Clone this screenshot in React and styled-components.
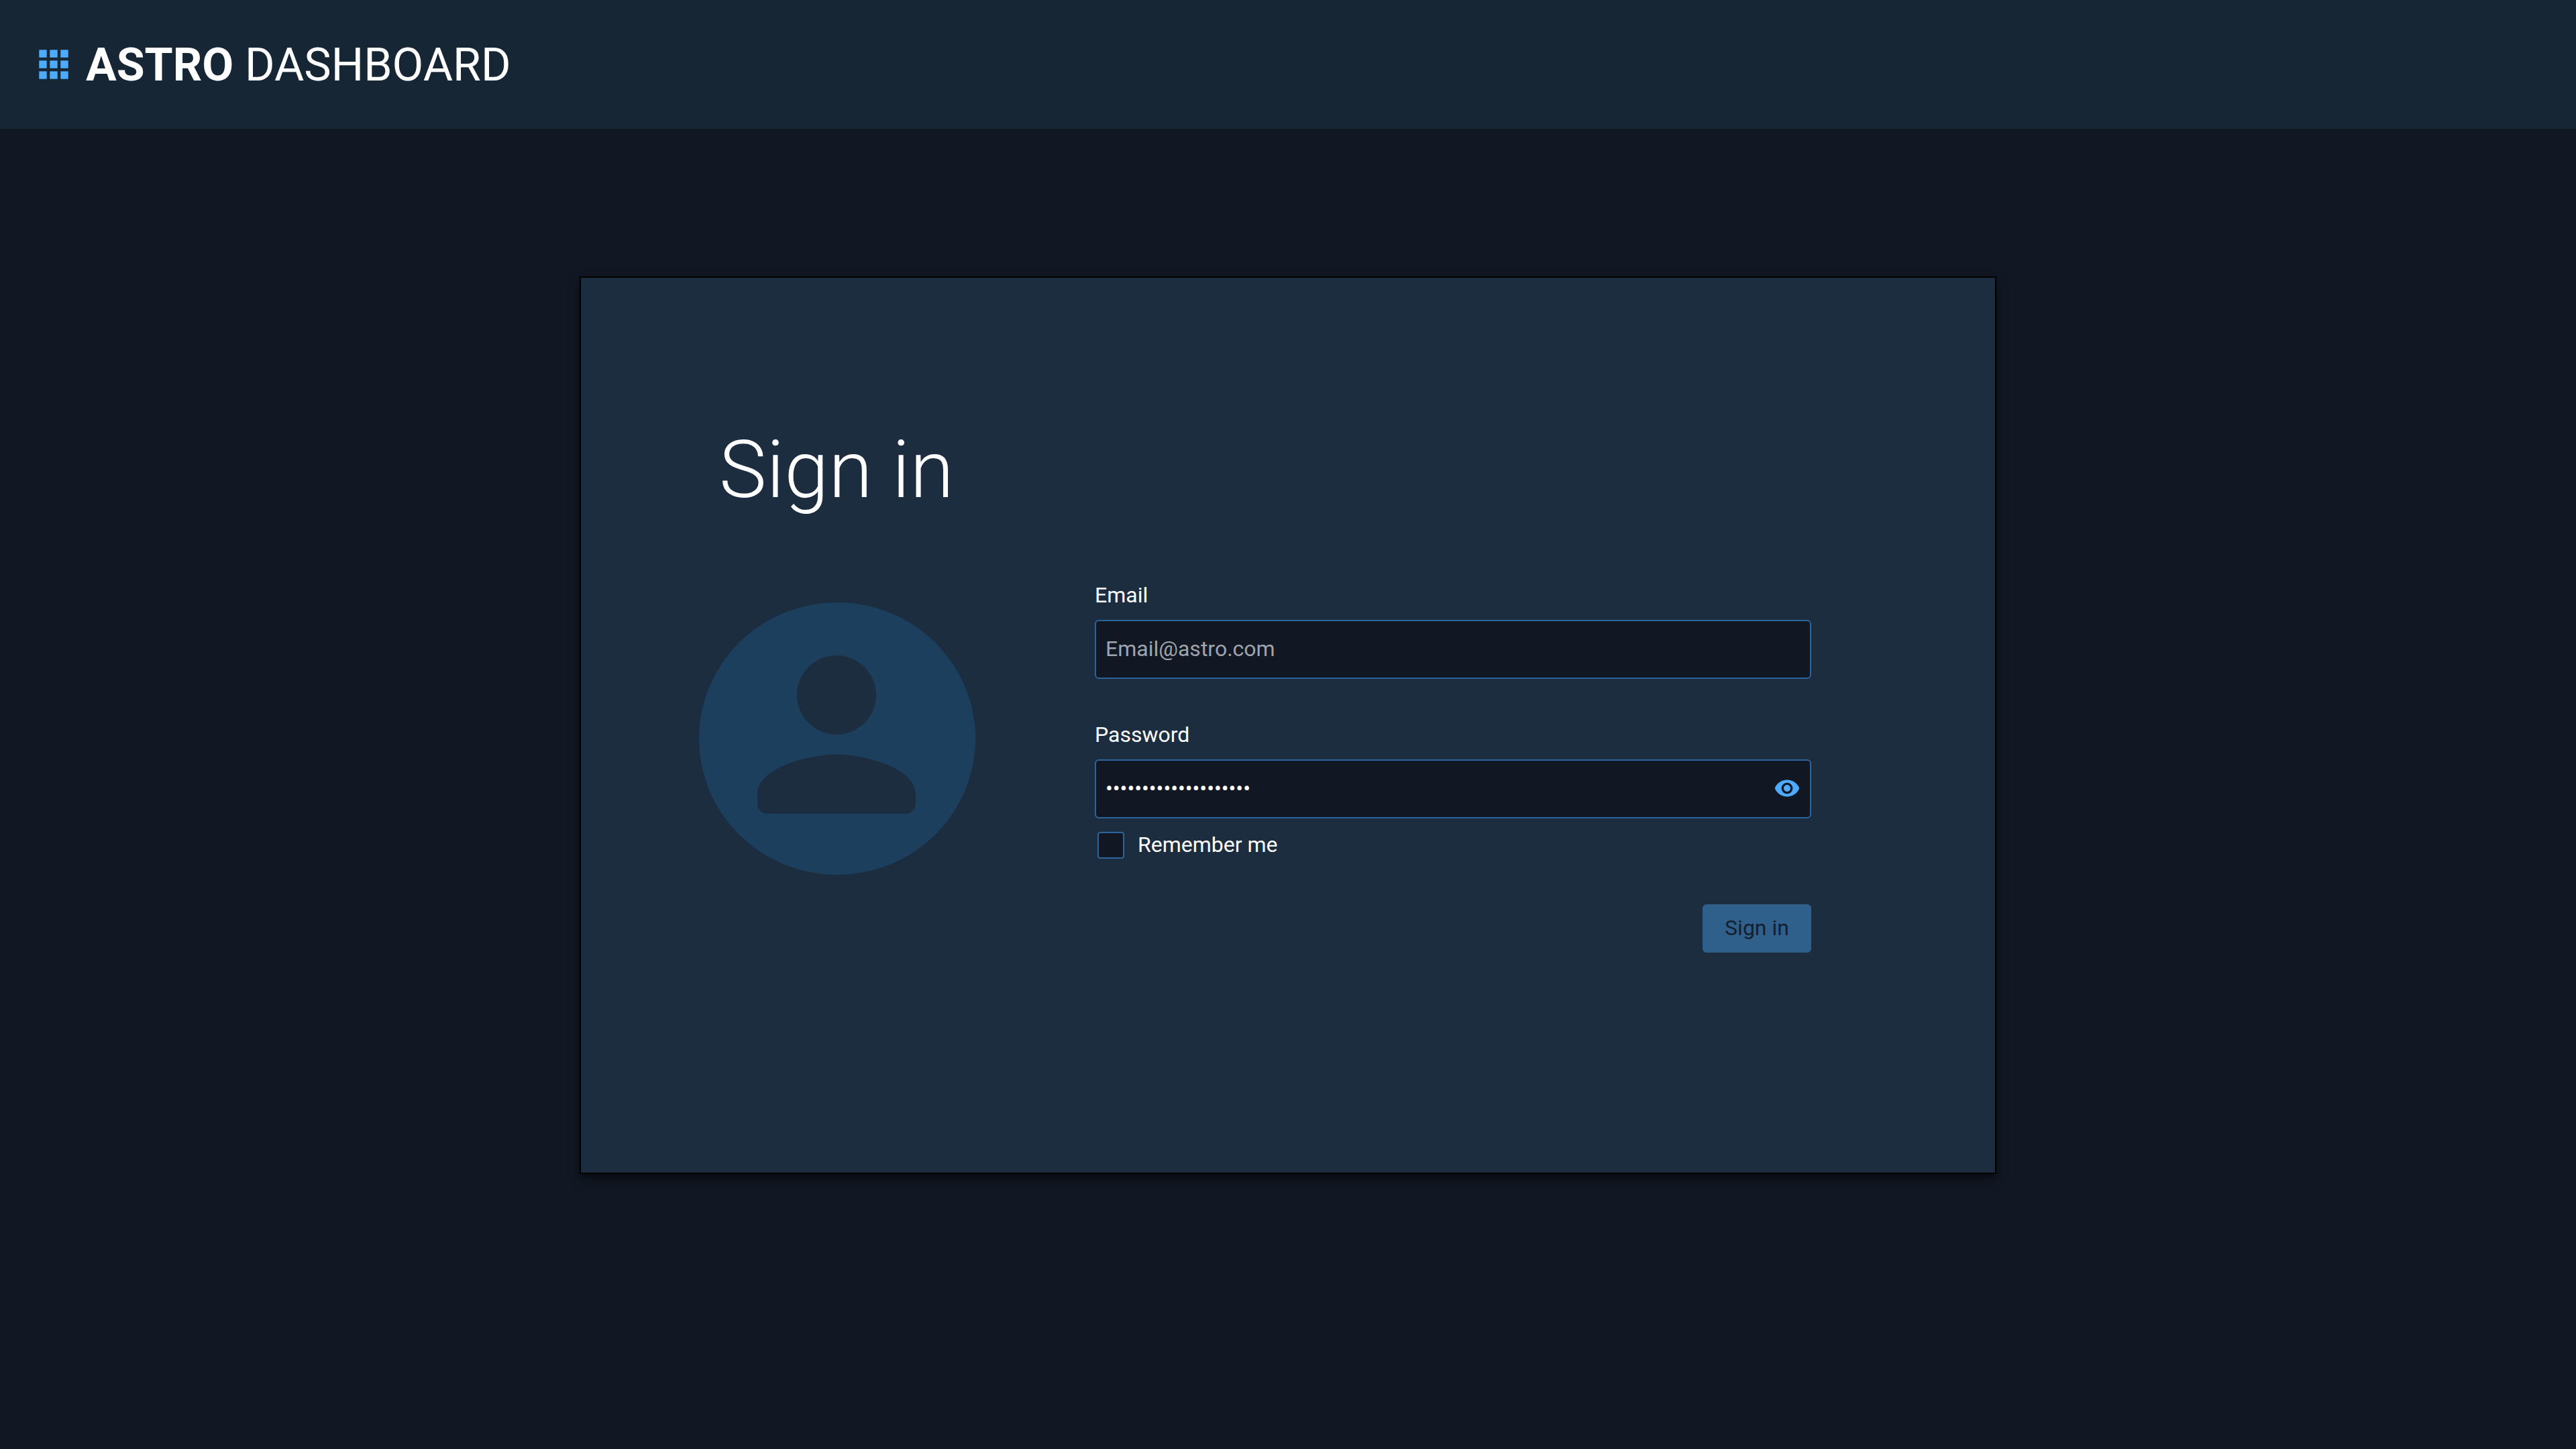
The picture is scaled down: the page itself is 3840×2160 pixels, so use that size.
import React, { useState } from "react";
import styled, { createGlobalStyle } from "styled-components";

const GlobalStyle = createGlobalStyle`
  *, *::before, *::after { box-sizing: border-box; }
  body {
    margin: 0;
    background: #111823;
    color: #ffffff;
    font-family: Roboto, "Liberation Sans", sans-serif;
    font-size: 32px;
    line-height: 38px;
  }
  input, button { font: inherit; }
`;

const Page = styled.div`
  display: flex;
  flex-direction: column;
  min-height: 100vh;
  background: #111823;
`;

const Header = styled.header`
  display: flex;
  align-items: center;
  gap: 24px;
  min-height: 192px;
  padding: 0 56px;
  background: #172635;
`;

const MenuButton = styled.button`
  display: flex;
  padding: 0;
  border: 0;
  background: none;
  color: #4dacff;
`;

const Brand = styled.h1`
  margin: 0;
  padding-top: 2px;
  font-size: 68px;
  font-weight: 400;
  line-height: 80px;
  text-transform: uppercase;
`;

const Main = styled.main`
  display: flex;
  justify-content: center;
  padding: 220px 0;
`;

const Card = styled.section`
  width: 55%;
  padding: 214px 274px 328px 176px;
  border: 2px solid #000000;
  background: #1c2d3f;
  box-shadow: 0 8px 12px rgba(0, 0, 0, 0.5);
`;

const Title = styled.h2`
  margin: 0 0 94px;
  padding-left: 30px;
  font-size: 119px;
  font-weight: 300;
  line-height: 146px;
`;

const Content = styled.div`
  display: grid;
  grid-template-columns: 412px 1fr;
  column-gap: 178px;
  align-items: start;
`;

const Avatar = styled.svg`
  display: block;
  margin-top: 30px;
`;

const Form = styled.form`
  display: flex;
  flex-direction: column;
`;

const Field = styled.div`
  display: flex;
  flex-direction: column;
  gap: 18px;
  margin-bottom: ${(p) => (p.$last ? "20px" : "64px")};
`;

const InputBox = styled.div`
  display: flex;
  align-items: center;
  height: 88px;
  padding: 0 14px 2px;
  border: 2px solid #2b659b;
  border-radius: 6px;
  background: #111823;
`;

const TextInput = styled.input`
  flex: 1;
  min-width: 0;
  padding: 0;
  border: 0;
  outline: 0;
  background: transparent;
  color: #ffffff;
  &::placeholder {
    color: #a0a4ab;
    opacity: 1;
  }
`;

const IconButton = styled.button`
  display: flex;
  padding: 0;
  border: 0;
  background: none;
  color: #4dacff;
`;

const Remember = styled.label`
  display: flex;
  align-items: flex-start;
  gap: 20px;
  padding-left: 4px;
  margin-bottom: 68px;
`;

const Checkbox = styled.input`
  appearance: none;
  width: 40px;
  height: 40px;
  margin: 0;
  border: 2px solid #2b659b;
  border-radius: 4px;
  background: #111823;
  &:checked { background: #4dacff; }
`;

const SubmitButton = styled.button`
  align-self: flex-end;
  min-width: 162px;
  height: 72px;
  padding: 0 32px 2px;
  border: 0;
  border-radius: 6px;
  background: #4dacff;
  color: #080c11;
  opacity: 0.4;
`;

const cells = [0, 16, 32];

export default function App() {
  const [visible, setVisible] = useState(false);
  return (
    <Page>
      <GlobalStyle />
      <Header>
        <MenuButton type="button" aria-label="Applications">
          <svg width="48" height="44" viewBox="-2 0 48 44" fill="currentColor">
            {cells.map((y) =>
              cells.map((x) => (
                <rect key={`${x}-${y}`} x={x + 0.3} y={y + 0.3} width="11.4" height="11.4" />
              ))
            )}
          </svg>
        </MenuButton>
        <Brand>
          <b>Astro</b> Dashboard
        </Brand>
      </Header>
      <Main>
        <Card>
          <Title>Sign in</Title>
          <Content>
            <Avatar width="412" height="406" viewBox="0 0 412 406" aria-hidden="true">
              <ellipse cx="206" cy="203" rx="206" ry="203" fill="#1c3f5d" />
              <path
                transform="translate(28 20) scale(14.75)"
                fill="#1c2d3f"
                d="M12 12c2.21 0 4-1.79 4-4s-1.79-4-4-4-4 1.79-4 4 1.79 4 4 4zm0 2c-2.67 0-8 1.34-8 4v1c0 .55.45 1 1 1h14c.55 0 1-.45 1-1v-1c0-2.66-5.33-4-8-4z"
              />
            </Avatar>
            <Form onSubmit={(e) => e.preventDefault()}>
              <Field>
                <label htmlFor="email">Email</label>
                <InputBox>
                  <TextInput id="email" type="email" placeholder="Email@astro.com" />
                </InputBox>
              </Field>
              <Field $last>
                <label htmlFor="password">Password</label>
                <InputBox>
                  <TextInput
                    id="password"
                    type={visible ? "text" : "password"}
                    defaultValue="12345678901234567890"
                  />
                  <IconButton
                    type="button"
                    aria-label="Show password"
                    onClick={() => setVisible(!visible)}
                  >
                    <svg width="40" height="40" viewBox="0 0 24 24" fill="currentColor">
                      <path d="M12 4.5C7 4.5 2.73 7.61 1 12c1.73 4.39 6 7.5 11 7.5s9.27-3.11 11-7.5c-1.73-4.39-6-7.5-11-7.5zM12 17c-2.76 0-5-2.24-5-5s2.24-5 5-5 5 2.24 5 5-2.24 5-5 5zm0-8c-1.66 0-3 1.34-3 3s1.34 3 3 3 3-1.34 3-3-1.34-3-3-3z" />
                    </svg>
                  </IconButton>
                </InputBox>
              </Field>
              <Remember>
                <Checkbox type="checkbox" />
                Remember me
              </Remember>
              <SubmitButton type="submit" disabled>
                Sign in
              </SubmitButton>
            </Form>
          </Content>
        </Card>
      </Main>
    </Page>
  );
}
